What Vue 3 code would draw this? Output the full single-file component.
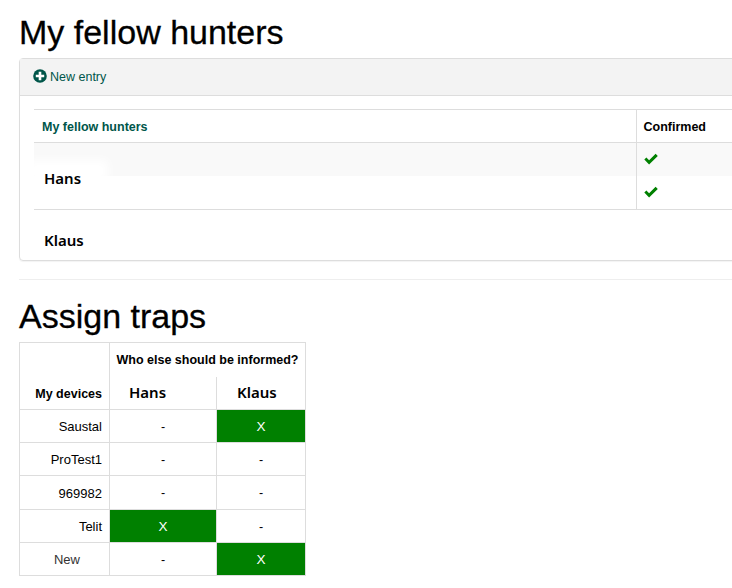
<template>
  <div class="page">
    <h1 class="title">My fellow hunters</h1>
    <div class="card">
      <div class="card-head">
        <a class="new-entry">
          <svg class="plus" viewBox="0 0 14 14" width="14" height="14">
            <circle cx="7" cy="7" r="6.8" fill="#00564a" />
            <path d="M5.7 2.8h2.6v2.9h2.9v2.6H8.3v2.9H5.7V8.3H2.8V5.7h2.9z" fill="#fff" />
          </svg>
          <span>New entry</span>
        </a>
      </div>
      <div class="card-body">
        <table class="hunters">
          <thead>
            <tr>
              <th class="name-col">My fellow hunters</th>
              <th class="conf-col">Confirmed</th>
            </tr>
          </thead>
          <tbody>
            <tr v-for="(h, i) in hunters" :key="h" :class="{ odd: i === 0 }">
              <td class="name-col"></td>
              <td class="conf-col">
                <svg class="check" viewBox="0 0 14 12" width="14" height="12">
                  <path d="M0.3 6.6l2.1-2.1 2.7 2.7L11.6 0.8 13.8 3 5.1 11.6z" fill="#008000" />
                </svg>
              </td>
            </tr>
          </tbody>
        </table>
        <div class="smudge"></div>
        <div class="hans">Hans</div>
        <div class="klaus">Klaus</div>
      </div>
    </div>
    <hr class="rule" />
    <h1 class="title second">Assign traps</h1>
    <table class="matrix">
      <colgroup>
        <col class="col-device" />
        <col class="col-hans" />
        <col class="col-klaus" />
      </colgroup>
      <thead>
        <tr>
          <th rowspan="2" class="device devices-head">My devices</th>
          <th colspan="2" class="who">Who else should be informed?</th>
        </tr>
        <tr>
          <th class="person person-first">Hans</th>
          <th class="person">Klaus</th>
        </tr>
      </thead>
      <tbody>
        <tr v-for="row in rows" :key="row.name">
          <td class="device" :class="{ faint: row.name === 'New' }">{{ row.name }}</td>
          <td v-for="(on, i) in row.cells" :key="i" class="cell" :class="{ on }">{{ on ? 'X' : '-' }}</td>
        </tr>
      </tbody>
    </table>
  </div>
</template>

<script setup>
const hunters = ['Hans', 'Klaus']
const rows = [
  { name: 'Saustal', cells: [false, true] },
  { name: 'ProTest1', cells: [false, false] },
  { name: '969982', cells: [false, false] },
  { name: 'Telit', cells: [true, false] },
  { name: 'New', cells: [false, true] },
]
</script>

<style>
html, body {
  margin: 0;
  background: #fff;
}
</style>

<style scoped>
.page {
  width: 732px;
  height: 588px;
  overflow: hidden;
  box-sizing: border-box;
  padding: 13px 0 0 19px;
  font-family: "Liberation Sans", Arial, sans-serif;
  font-size: 12.5px;
  color: #000;
}
.title {
  margin: 0;
  font-size: 34px;
  line-height: 38px;
  font-weight: 400;
  -webkit-text-stroke: 0.3px #000;
  white-space: nowrap;
}
.card {
  width: 800px;
  margin-top: 7px;
  border: 1px solid #ddd;
  border-radius: 4px;
  box-shadow: 0 1px 1px rgba(0, 0, 0, 0.05);
}
.card-head {
  height: 36px;
  background: #f3f3f3;
  border-bottom: 1px solid #ddd;
  padding-left: 13px;
  display: flex;
  align-items: center;
}
.new-entry {
  display: flex;
  align-items: center;
  gap: 3px;
  color: #00564a;
}
.plus {
  margin-top: -3px;
}
.card-body {
  position: relative;
  height: 151px;
  padding: 13px 0 0 14px;
}
.hunters {
  border-collapse: collapse;
  width: 786px;
  table-layout: fixed;
  border-top: 1px solid #ddd;
  border-bottom: 1px solid #ddd;
}
.hunters th,
.hunters td {
  height: 33px;
  padding: 0 8px;
  text-align: left;
  box-sizing: border-box;
}
.hunters tbody tr:last-child td {
  height: 34px;
}
.hunters thead th {
  border-bottom: 1px solid #ddd;
  padding-top: 1px;
}
.hunters .name-col {
  width: 602px;
  color: #00564a;
}
.hunters .conf-col {
  border-left: 1px solid #ddd;
  padding-left: 7px;
  color: #000;
}
.hunters tr.odd td {
  background: #f9f9f9;
}
.check {
  display: block;
}
.smudge {
  position: absolute;
  left: 8px;
  top: 64px;
  width: 80px;
  height: 22px;
  background: #fff;
  filter: blur(5px);
}
.hans,
.klaus {
  position: absolute;
  left: 24px;
  font-family: "Noto Sans", sans-serif;
  font-size: 15px;
  font-weight: 600;
  line-height: 20px;
}
.hans {
  top: 72px;
}
.klaus {
  top: 134px;
}
.rule {
  margin: 18px 0 0;
  border: 0;
  border-top: 1px solid #eee;
}
.second {
  margin-top: 17px;
}
.matrix {
  margin-top: 7px;
  border-collapse: collapse;
  table-layout: fixed;
  width: 286px;
}
.col-device {
  width: 90px;
}
.col-hans {
  width: 107px;
}
.col-klaus {
  width: 89px;
}
.matrix th,
.matrix td {
  border: 1px solid #ddd;
  height: 33px;
  box-sizing: border-box;
  padding: 1px 7px 0;
}
.matrix tbody tr:nth-child(3) td,
.matrix th.who {
  height: 34px;
}
.matrix .device {
  text-align: right;
  font-weight: 400;
  font-size: 13px;
}
.matrix th.devices-head {
  font-size: 12.5px;
  font-weight: 700;
  vertical-align: bottom;
  padding-bottom: 8px;
}
.matrix .faint {
  color: #333;
  padding-right: 29px;
}
.matrix .who {
  padding: 0;
  text-align: center;
  white-space: nowrap;
  border-bottom: 0;
}
.matrix .person {
  font-family: "Noto Sans", sans-serif;
  font-size: 15px;
  font-weight: 600;
  text-align: left;
  padding: 0 7px 1px 20px;
  border-top: 0;
}
.matrix .person-first {
  padding-left: 19px;
}
.matrix .cell {
  text-align: center;
}
.matrix .cell.on {
  background: #008000;
  color: #fff;
  font-size: 13.5px;
}
</style>
